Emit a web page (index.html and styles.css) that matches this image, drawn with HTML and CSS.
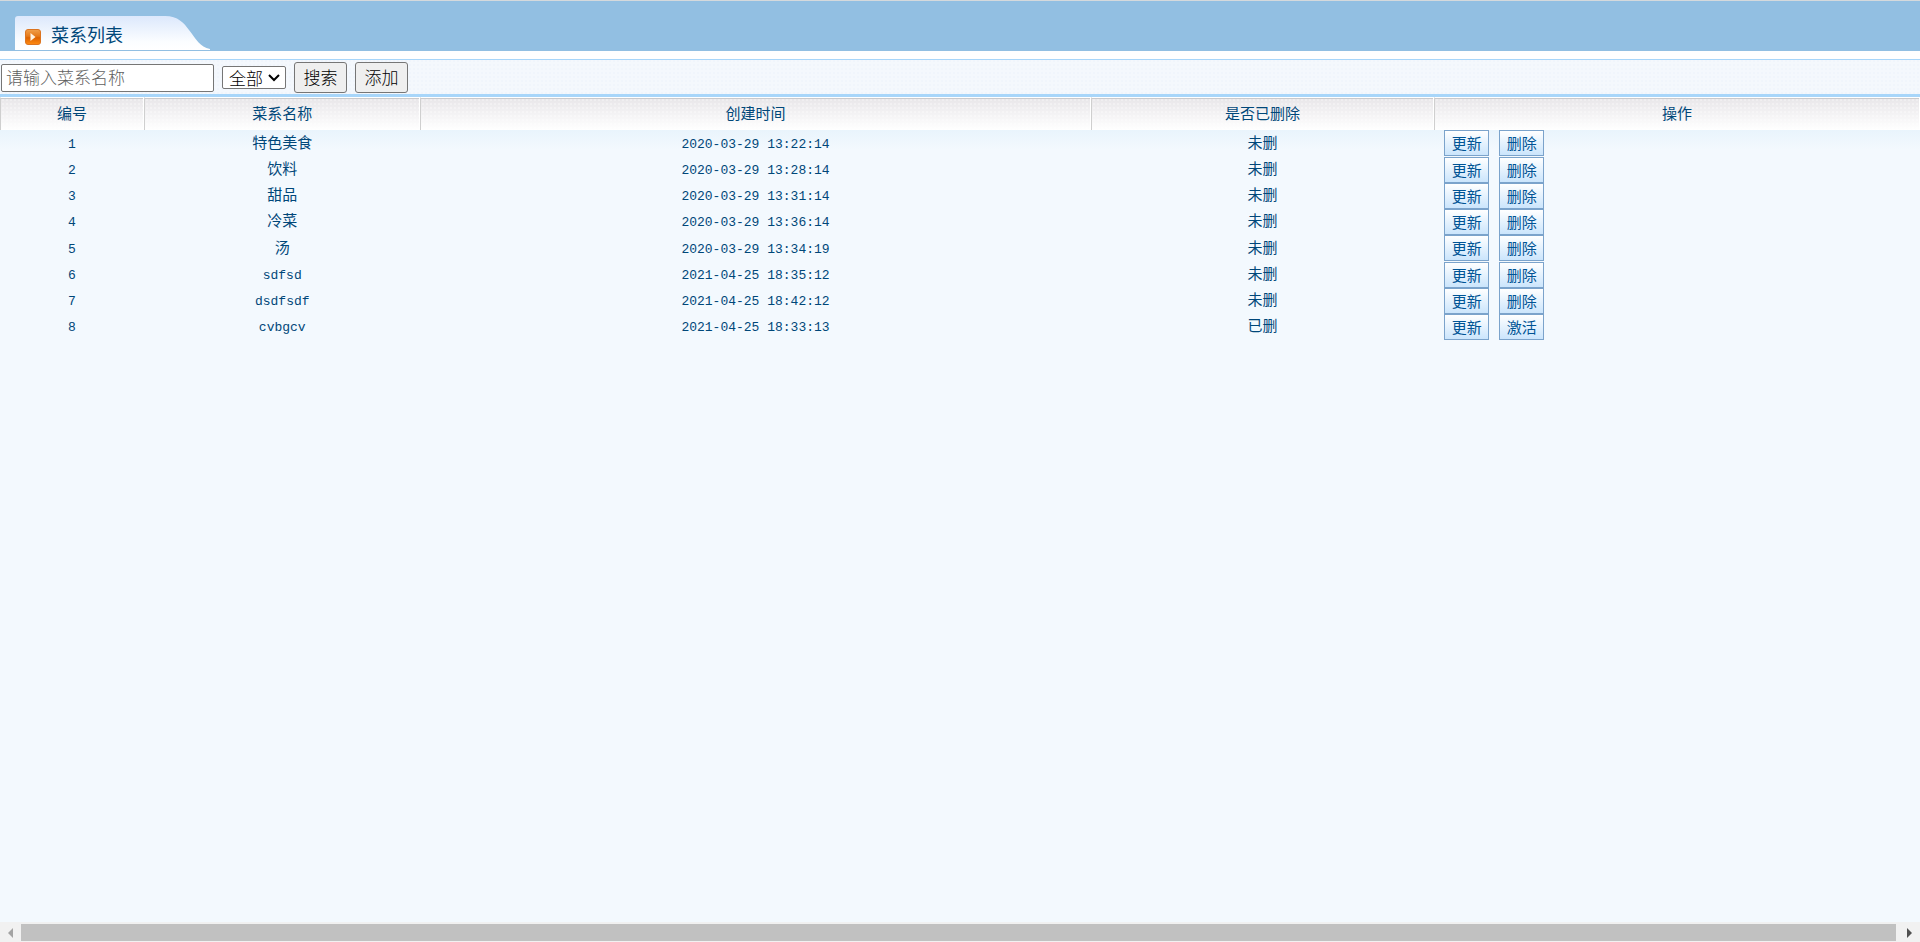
FILE: index.html
```html
<!DOCTYPE html>
<html lang="zh-CN">
<head>
<meta charset="utf-8">
<title>菜系列表</title>
<link rel="stylesheet" href="styles.css">
</head>
<body>
<header class="banner">
  <div class="tab">
    <svg class="tab-shape" width="195" height="34" viewBox="0 0 195 34" aria-hidden="true">
      <defs>
        <linearGradient id="tabFill" x1="0" y1="0" x2="0" y2="1"><stop offset="0" stop-color="#dce8fc"/><stop offset="0.75" stop-color="#fbfdff"/><stop offset="1" stop-color="#fff"/></linearGradient>
      </defs>
      <path fill="url(#tabFill)" d="M0 34V3Q0 0 3 0H150C163 0 169 7 174 14C181 23 185 31 195 33V34Z"/>
    </svg>
    <svg class="tab-icon" width="16" height="16" viewBox="0 0 16 16" aria-hidden="true">
      <defs>
        <linearGradient id="iconFill" x1="0" y1="0" x2="0" y2="1"><stop offset="0" stop-color="#f0a04c"/><stop offset="0.45" stop-color="#e5791a"/><stop offset="0.55" stop-color="#dd6200"/><stop offset="1" stop-color="#ff8b12"/></linearGradient>
      </defs>
      <rect x="0.5" y="0.5" width="15" height="15" rx="2.5" fill="url(#iconFill)" stroke="#dc7420"/>
      <path fill="#fff3e2" d="M5.5 4L10.5 8L5.5 12Z"/>
    </svg>
    <h1 class="tab-title">菜系列表</h1>
  </div>
</header>
<form class="toolbar">
  <input class="field" type="text" placeholder="请输入菜系名称" aria-label="菜系名称">
  <div class="picker-wrap">
    <select class="picker" aria-label="状态"><option>全部</option></select>
    <svg class="picker-arrow" width="12" height="8" viewBox="0 0 12 8" aria-hidden="true"><path fill="none" stroke="#000" stroke-width="2" d="M1 1L6 6L11 1"/></svg>
  </div>
  <button class="tool-button" type="button">搜索</button>
  <button class="tool-button" type="button">添加</button>
</form>
<main class="content">
  <table class="list">
    <colgroup><col class="c-id"><col class="c-name"><col class="c-time"><col class="c-state"><col></colgroup>
    <thead><tr><th>编号</th><th>菜系名称</th><th>创建时间</th><th>是否已删除</th><th>操作</th></tr></thead>
    <tbody>
      <tr><td>1</td><td>特色美食</td><td>2020-03-29 13:22:14</td><td>未删</td><td class="ops"><div class="actions"><button type="button">更新</button><button type="button">删除</button></div></td></tr>
      <tr><td>2</td><td>饮料</td><td>2020-03-29 13:28:14</td><td>未删</td><td class="ops"><div class="actions"><button type="button">更新</button><button type="button">删除</button></div></td></tr>
      <tr><td>3</td><td>甜品</td><td>2020-03-29 13:31:14</td><td>未删</td><td class="ops"><div class="actions"><button type="button">更新</button><button type="button">删除</button></div></td></tr>
      <tr><td>4</td><td>冷菜</td><td>2020-03-29 13:36:14</td><td>未删</td><td class="ops"><div class="actions"><button type="button">更新</button><button type="button">删除</button></div></td></tr>
      <tr><td>5</td><td>汤</td><td>2020-03-29 13:34:19</td><td>未删</td><td class="ops"><div class="actions"><button type="button">更新</button><button type="button">删除</button></div></td></tr>
      <tr><td>6</td><td>sdfsd</td><td>2021-04-25 18:35:12</td><td>未删</td><td class="ops"><div class="actions"><button type="button">更新</button><button type="button">删除</button></div></td></tr>
      <tr><td>7</td><td>dsdfsdf</td><td>2021-04-25 18:42:12</td><td>未删</td><td class="ops"><div class="actions"><button type="button">更新</button><button type="button">删除</button></div></td></tr>
      <tr><td>8</td><td>cvbgcv</td><td>2021-04-25 18:33:13</td><td>已删</td><td class="ops"><div class="actions"><button type="button">更新</button><button type="button">激活</button></div></td></tr>
    </tbody>
  </table>
</main>
<div class="scrollbar" aria-hidden="true">
  <svg width="21" height="20" viewBox="0 0 21 20"><path fill="#a3a3a3" d="M13 6V16L8 11Z"/></svg>
  <div class="thumb"></div>
  <svg width="24" height="20" viewBox="0 0 24 20"><path fill="#505050" d="M11 6V16L16 11Z"/></svg>
</div>
</body>
</html>
```
FILE: styles.css
```css
* { box-sizing: border-box; }

body {
  margin: 0;
  min-height: 100vh;
  display: flex;
  flex-direction: column;
  background: #f3f9fe;
  color: #004779;
  font-family: "Liberation Mono", "Noto Sans CJK SC", monospace;
  font-size: 13px;
}

.banner {
  padding: 15px 15px 1px;
  background: #92bfe2;
  border-top: 1px solid #d5d9dc;
}

.tab {
  position: relative;
  display: flex;
  align-items: center;
  gap: 10px;
  width: 195px;
  height: 34px;
  padding: 2px 0 0 10px;
}

.tab-shape { position: absolute; inset: 0; }
.tab-icon { position: relative; margin-top: 6px; }

.tab-title {
  position: relative;
  margin: 0;
  font: 400 18px/24px "Noto Sans CJK SC", sans-serif;
}

.toolbar {
  display: flex;
  align-items: center;
  gap: 8px;
  height: 46px;
  padding: 2px 1px 0;
  border-top: 8px solid #fff;
  border-bottom: 3px solid #a8d6fa;
  background-color: #f4f8fd;
  background-image: linear-gradient(#a8d6fa 1px, transparent 1px), radial-gradient(#f0f5fc 1px, transparent 1px);
  background-size: 100% 100%, 4px 4px;
  background-repeat: no-repeat, repeat;
}

.field, .picker, .tool-button {
  font: 300 17px/22px "Noto Sans CJK SC", sans-serif;
  color: #000;
  border: 1px solid #767676;
  border-radius: 2px;
}

.field {
  width: 213px;
  height: 28px;
  padding: 0 4px 2px;
  background: #fff;
}

.field::placeholder { color: #606060; }

.picker-wrap {
  position: relative;
  display: flex;
}

.picker {
  appearance: none;
  width: 64px;
  height: 23px;
  padding: 0 0 0 6px;
  line-height: 20px;
  background: #fff;
}

.picker-arrow {
  position: absolute;
  top: 8px;
  right: 6px;
  pointer-events: none;
}

.tool-button {
  width: 53px;
  height: 31px;
  padding: 0 0 2px;
  background: #efefef;
  border-radius: 3px;
}

.content {
  flex: 1;
  background: linear-gradient(#e9f4fc, #f3f9fe 20px) 0 33px no-repeat;
}

.list {
  width: 100%;
  table-layout: fixed;
  border-collapse: separate;
  border-spacing: 0;
  text-align: center;
}

.c-id { width: 7.5%; }
.c-name { width: 14.4%; }
.c-time { width: 34.9%; }
.c-state { width: 17.9%; }

th {
  height: 33px;
  padding: 3px 0 0;
  font-weight: 400;
  font-size: 15px;
  line-height: 20px;
  border-top: 1px solid #fff;
  border-left: 1px solid #cfcfcf;
  border-right: 1px solid #fff;
  background-image: linear-gradient(#c9c9cb 1px, transparent 1px), radial-gradient(rgba(255, 255, 255, 0.3) 1px, transparent 1px), linear-gradient(#e8e6e9, #fff);
  background-size: 100% 100%, 4px 4px, 100% 100%;
}

td {
  height: 26px;
  padding: 2px 0 0;
  line-height: 20px;
}

tbody tr:nth-child(4n+1) td { height: 27px; }

td:nth-child(even) { font-size: 15px; }
tr:nth-child(n+6) td:nth-child(2) { font-size: 13px; }

td.ops {
  padding: 0;
  vertical-align: top;
}

.actions {
  display: flex;
  gap: 10px;
  padding-left: 10px;
}

.actions button {
  width: 45px;
  height: 26px;
  padding: 0 0 1px;
  border: 1px solid #7ba3cb;
  background: linear-gradient(#fff, #cbe5fc);
  color: #005495;
  font: 400 15px/20px "Noto Sans CJK SC", sans-serif;
}

.scrollbar {
  display: flex;
  height: 20px;
  background: #f1f1f1;
}

.thumb {
  flex: 1;
  height: 17px;
  margin-top: 2px;
  background: #c1c1c1;
}
```
